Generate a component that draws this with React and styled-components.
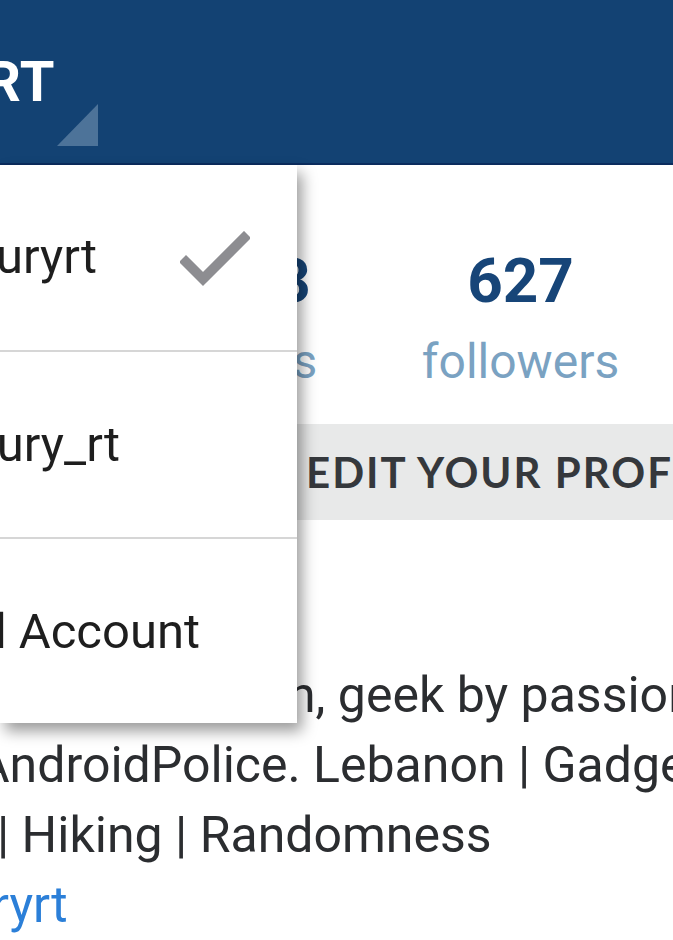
import React from 'react';
import styled, { createGlobalStyle } from 'styled-components';

const Global = createGlobalStyle`
  html, body {
    margin: 0;
    padding: 0;
    background: #ffffff;
    overflow: hidden;
  }
  body {
    font-family: Roboto, "Noto Sans", "Liberation Sans", sans-serif;
    -webkit-font-smoothing: antialiased;
  }
`;

const Page = styled.div`
  position: relative;
  width: 673px;
  height: 940px;
  overflow: hidden;
  background: #fff;
`;

const Header = styled.header`
  height: 163px;
  background: #134273;
  border-bottom: 2px solid #0b2c5e;
  display: flex;
  align-items: flex-start;
`;

const TitleClip = styled.div`
  width: ${p => p.end}px;
  flex: none;
  display: flex;
  justify-content: flex-end;
  white-space: nowrap;
`;

const Title = styled.h1`
  margin: 52px 0 0;
  font-size: 56px;
  line-height: 60px;
  font-weight: 700;
  color: #fff;
  letter-spacing: 0.5px;
`;

const Caret = styled.svg`
  flex: none;
  margin: 104px 0 0 2px;
`;

const Menu = styled.ul`
  position: absolute;
  left: 0;
  top: 165px;
  width: 297px;
  margin: 0;
  padding: 0;
  list-style: none;
  background: #fff;
  box-shadow: 5px 8px 14px rgba(0, 0, 0, 0.4);
  z-index: 2;
`;

const MenuItem = styled.li`
  height: ${p => p.h}px;
  display: flex;
  align-items: center;
  border-bottom: ${p => (p.last ? 'none' : '2px solid #d6d6d6')};
  box-sizing: border-box;
  position: relative;
`;

const MenuLabel = styled.div`
  width: ${p => p.end}px;
  flex: none;
  display: flex;
  justify-content: flex-end;
  white-space: nowrap;
  font-size: 49px;
  color: #1e1e1e;
  margin-top: ${p => p.shift || 0}px;
`;

const Check = styled.svg`
  position: absolute;
  left: 180px;
  top: 66px;
`;

const Stats = styled.div`
  display: grid;
  grid-template-columns: repeat(3, 263px);
  margin: 85px 0 0 126px;
`;

const Stat = styled.div`
  display: flex;
  flex-direction: column;
  align-items: center;
`;

const StatNum = styled.span`
  font-size: 62px;
  line-height: 62px;
  font-weight: 700;
  color: #174578;
`;

const StatLabel = styled.span`
  margin-top: 22px;
  font-size: 48px;
  line-height: 56px;
  color: #7aa2c2;
`;

const EditButton = styled.div`
  margin: 34px 0 0 200px;
  height: 96px;
  background: #e8e9e9;
  display: flex;
  align-items: center;
  padding-left: 106px;
  white-space: nowrap;
  font-family: Lato, Roboto, sans-serif;
  font-size: 42px;
  font-weight: 700;
  letter-spacing: 2px;
  color: #35383c;
`;

const Bio = styled.div`
  margin-top: 140px;
  font-size: 50px;
  line-height: 70px;
  color: #2b2d30;
  white-space: nowrap;
`;

const BioLine = styled.div`
  margin-left: ${p => p.offset}px;
  color: ${p => (p.link ? '#2b7fd8' : 'inherit')};
`;

export default function App() {
  return (
    <Page>
      <Global />
      <Header>
        <TitleClip end={55}>
          <Title>RITAELKHOURYRT</Title>
        </TitleClip>
        <Caret width="41" height="42" viewBox="0 0 41 42">
          <polygon points="41,0 41,42 0,42" fill="#4d7399" />
        </Caret>
      </Header>

      <Menu>
        <MenuItem h={187}>
          <MenuLabel end={97} shift={-2}>ritaelkhouryrt</MenuLabel>
          <Check width="70" height="58" viewBox="0 0 70 58">
            <polyline
              points="6,31 23,48 64,7"
              fill="none"
              stroke="#8d8d91"
              strokeWidth="10"
              strokeLinecap="square"
            />
          </Check>
        </MenuItem>
        <MenuItem h={187}>
          <MenuLabel end={120}>ritaelkhoury_rt</MenuLabel>
        </MenuItem>
        <MenuItem h={184} last>
          <MenuLabel end={200}>Add Account</MenuLabel>
        </MenuItem>
      </Menu>

      <Stats>
        <Stat>
          <StatNum>483</StatNum>
          <StatLabel>posts</StatLabel>
        </Stat>
        <Stat>
          <StatNum>627</StatNum>
          <StatLabel>followers</StatLabel>
        </Stat>
        <Stat>
          <StatNum>312</StatNum>
          <StatLabel>following</StatLabel>
        </Stat>
      </Stats>

      <EditButton>EDIT YOUR PROFILE</EditButton>

      <Bio>
        <BioLine offset={288}>n, geek by passion. Editor at</BioLine>
        <BioLine offset={-23}>AndroidPolice. Lebanon | Gadgets</BioLine>
        <BioLine offset={-3}>| Hiking | Randomness</BioLine>
        <BioLine offset={-8} link>ryrt</BioLine>
      </Bio>
    </Page>
  );
}
